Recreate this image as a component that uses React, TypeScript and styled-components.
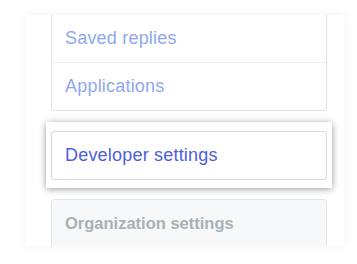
import React from 'react';
import styled, { createGlobalStyle } from 'styled-components';

const GlobalStyle = createGlobalStyle`
  body {
    margin: 0;
    background: #ffffff;
    font-family: "Liberation Sans", Arial, sans-serif;
  }
`;

const Page = styled.div`
  width: 357px;
  height: 264px;
  padding-top: 15px;
  box-sizing: border-box;
`;

const Panel = styled.div`
  margin-left: 26px;
  width: 318px;
  height: 231px;
  box-sizing: border-box;
  padding: 0 17px 0 25px;
  background: #ffffff;
  overflow: hidden;
  box-shadow: 0 0 10px rgba(0, 0, 0, 0.06);
`;

const Menu = styled.nav<{ $muted?: boolean; $open?: boolean }>`
  display: flex;
  flex-direction: column;
  border: 1px solid #e1e4e8;
  border-top: ${(p) => (p.$open ? 'none' : '1px solid #e1e4e8')};
  border-radius: ${(p) => (p.$open ? '0 0 3px 3px' : '3px')};
  background: ${(p) => (p.$muted ? '#f6f8fa' : '#ffffff')};
`;

const Item = styled.a<{ $tone: 'faded' | 'active' | 'muted' }>`
  display: flex;
  align-items: center;
  height: 47px;
  padding-left: 13px;
  font-size: ${(p) => (p.$tone === 'muted' ? '16.5px' : '18px')};
  letter-spacing: ${(p) => (p.$tone === 'muted' ? '0' : '0.2px')};
  text-decoration: none;
  color: ${(p) =>
    p.$tone === 'active' ? '#4d60dc' : p.$tone === 'faded' ? '#90a8ef' : '#aab0b6'};
  font-weight: ${(p) => (p.$tone === 'muted' ? 700 : 400)};

  & + & {
    border-top: 1px solid #eaecef;
  }
`;

const Highlight = styled.div`
  margin: 11px -5px;
  padding: 9px 5px 8px;
  background: #ffffff;
  box-shadow: 0 1px 7px rgba(0, 0, 0, 0.4);

  ${Menu} {
    border-color: #d6d9de;
  }
`;

export default function App() {
  return (
    <>
      <GlobalStyle />
      <Page>
        <Panel>
          <Menu $open>
            <Item $tone="faded">Saved replies</Item>
            <Item $tone="faded">Applications</Item>
          </Menu>
          <Highlight>
            <Menu>
              <Item $tone="active">Developer settings</Item>
            </Menu>
          </Highlight>
          <Menu $muted>
            <Item $tone="muted">Organization settings</Item>
            <Item $tone="muted">&nbsp;</Item>
          </Menu>
        </Panel>
      </Page>
    </>
  );
}
